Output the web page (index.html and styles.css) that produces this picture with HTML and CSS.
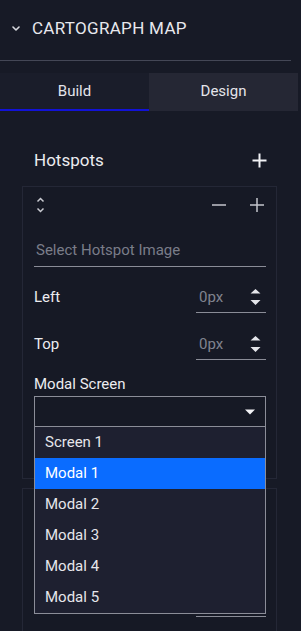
FILE: index.html
```html
<!DOCTYPE html>
<html>
<head>
<meta charset="utf-8">
<link rel="stylesheet" href="styles.css">
</head>
<body>
<div class="panel">
  <div class="header">
    <svg class="chev" width="8" height="5" viewBox="0 0 8 5"><path d="M1 1 L4 4 L7 1" fill="none" stroke="#d8d9de" stroke-width="1.6" stroke-linecap="round" stroke-linejoin="round"/></svg>
    <span class="title">CARTOGRAPH MAP</span>
  </div>
  <div class="rule"></div>
  <div class="tabs">
    <div class="tab active">Build</div>
    <div class="tab">Design</div>
  </div>
  <div class="section">
    <div class="section-head">
      <span class="section-title">Hotspots</span>
      <svg class="add-big" width="15" height="15" viewBox="0 0 15 15"><path d="M7.5 0.5 V14.5 M0.5 7.5 H14.5" stroke="#f2f2f5" stroke-width="2"/></svg>
    </div>

    <div class="card">
      <div class="card-head">
        <svg class="sort" width="9" height="16" viewBox="0 0 9 16"><path d="M1.5 4.5 L4.5 1.5 L7.5 4.5 M1.5 11.5 L4.5 14.5 L7.5 11.5" fill="none" stroke="#c9cad1" stroke-width="1.5"/></svg>
        <div class="actions">
          <svg width="16" height="16" viewBox="0 0 16 16"><path d="M1 8 H15" stroke="#c4c5cc" stroke-width="1.5"/></svg>
          <svg width="16" height="16" viewBox="0 0 16 16"><path d="M8 1 V15 M1 8 H15" stroke="#c4c5cc" stroke-width="1.5"/></svg>
        </div>
      </div>
      <div class="image-field">Select Hotspot Image</div>
      <div class="num-row">
        <span class="label">Left</span>
        <div class="num">
          <span class="num-val">0px</span>
          <svg class="spin" width="11" height="18" viewBox="0 0 11 18"><path d="M5.5 1 L10.5 5.5 H0.5 Z M0.5 12 H10.5 L5.5 17 Z" fill="#e4e5ea"/></svg>
        </div>
      </div>
      <div class="num-row second">
        <span class="label">Top</span>
        <div class="num">
          <span class="num-val">0px</span>
          <svg class="spin" width="11" height="18" viewBox="0 0 11 18"><path d="M5.5 1 L10.5 5.5 H0.5 Z M0.5 12 H10.5 L5.5 17 Z" fill="#e4e5ea"/></svg>
        </div>
      </div>
      <div class="select-label">Modal Screen</div>
      <div class="select-wrap">
        <div class="select">
          <svg width="10" height="6" viewBox="0 0 10 6"><path d="M0 0.5 H10 L5 5.5 Z" fill="#f2f2f5"/></svg>
        </div>
        <ul class="menu">
          <li class="item">Screen 1</li>
          <li class="item selected">Modal 1</li>
          <li class="item">Modal 2</li>
          <li class="item">Modal 3</li>
          <li class="item">Modal 4</li>
          <li class="item">Modal 5</li>
        </ul>
      </div>
    </div>

    <div class="card card-next">
      <div class="card-head">
        <svg class="sort" width="9" height="16" viewBox="0 0 9 16"><path d="M1.5 4.5 L4.5 1.5 L7.5 4.5 M1.5 11.5 L4.5 14.5 L7.5 11.5" fill="none" stroke="#c9cad1" stroke-width="1.5"/></svg>
        <div class="actions">
          <svg width="16" height="16" viewBox="0 0 16 16"><path d="M1 8 H15" stroke="#c4c5cc" stroke-width="1.5"/></svg>
          <svg width="16" height="16" viewBox="0 0 16 16"><path d="M8 1 V15 M1 8 H15" stroke="#c4c5cc" stroke-width="1.5"/></svg>
        </div>
      </div>
      <div class="image-field empty"></div>
      <div class="num-row next-row">
        <span class="label"></span>
        <div class="num"></div>
      </div>
    </div>
  </div>
</div>
</body>
</html>
```

FILE: styles.css
```css
html, body {
  margin: 0;
  padding: 0;
  height: 631px;
  overflow: hidden;
  background: #171a26;
}
body {
  font-family: Roboto, "Liberation Sans", sans-serif;
  color: #e6e6eb;
}
.panel {
  width: 301px;
}
.header {
  height: 56px;
  display: flex;
  align-items: center;
  padding-left: 12px;
  box-sizing: border-box;
}
.chev {
  display: block;
  margin-right: 12px;
}
.title {
  font-size: 17px;
  line-height: 20px;
  letter-spacing: 0.3px;
  color: #e8e8ed;
}
.rule {
  margin-top: 4px;
  width: 291px;
  height: 1px;
  background: #444756;
}
.tabs {
  margin-top: 12px;
  display: flex;
  width: 298px;
}
.tab {
  flex: 1;
  height: 38px;
  box-sizing: border-box;
  border-bottom: 2px solid transparent;
  display: flex;
  align-items: center;
  justify-content: center;
  font-size: 15px;
  color: #e4e4ea;
  background: #252734;
}
.tab.active {
  background: #1a1d2a;
  border-bottom-color: #1212d6;
}
.section {
  padding-top: 31px;
  padding-left: 22px;
  width: 255px;
}
.section-head {
  height: 36px;
  display: flex;
  align-items: center;
  justify-content: space-between;
  padding: 0 10px 0 12px;
}
.section-title {
  font-size: 17px;
  line-height: 20px;
  color: #ececf0;
}
.add-big {
  display: block;
}
.card {
  margin-top: 8px;
  border: 1px solid #242736;
  background: #161925;
  padding: 0 10px 51px 11px;
}
.card-next {
  margin-top: 9px;
}
.card-head {
  height: 35px;
  display: flex;
  align-items: center;
  justify-content: space-between;
}
.sort {
  display: block;
  margin-left: 2px;
}
.actions {
  display: flex;
  gap: 22px;
  margin-right: 1px;
}
.actions svg {
  display: block;
}
.image-field {
  padding: 18px 0 6px 2px;
  line-height: 20px;
  height: 20px;
  font-size: 15px;
  color: #7a7d89;
  border-bottom: 1px solid #8a8c97;
}
.num-row {
  margin-top: 14px;
  height: 32px;
  display: flex;
  align-items: center;
  justify-content: space-between;
}
.num-row.second {
  margin-top: 15px;
}
.num-row.next-row {
  margin-top: 16px;
}
.label {
  font-size: 15px;
  line-height: 20px;
  color: #ececf0;
}
.num {
  width: 70px;
  height: 32px;
  box-sizing: border-box;
  border-bottom: 1px solid #8a8c97;
  display: flex;
  align-items: center;
  justify-content: space-between;
  padding: 0 5px 0 3px;
}
.num-val {
  font-size: 15px;
  color: #80838e;
}
.spin {
  display: block;
}
.select-label {
  margin-top: 14px;
  font-size: 15px;
  line-height: 20px;
  color: #ececf0;
}
.select-wrap {
  position: relative;
  margin-top: 2px;
}
.select {
  height: 31px;
  box-sizing: border-box;
  border: 1px solid #8b8d98;
  display: flex;
  align-items: center;
  justify-content: flex-end;
  padding-right: 10px;
}
.select svg {
  display: block;
}
.menu {
  position: absolute;
  z-index: 10;
  left: 0;
  right: 0;
  top: 30px;
  margin: 0;
  padding: 0;
  list-style: none;
  background: #1e2030;
  border: 1px solid #8b8d98;
}
.item {
  height: 31px;
  line-height: 31px;
  padding-left: 10px;
  font-size: 15px;
  color: #e6e6eb;
}
.item.selected {
  background: #0a6cff;
  color: #ffffff;
}
```
